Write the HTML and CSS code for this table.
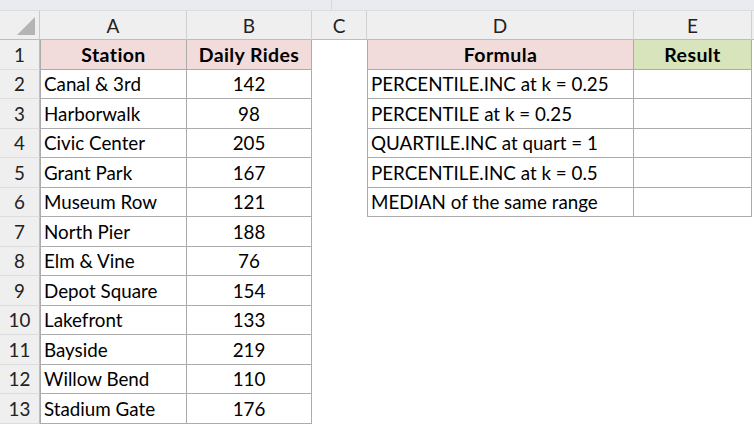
FILE: index.html
```html
<!DOCTYPE html>
<html>
<head>
<meta charset="utf-8">
<link rel="stylesheet" href="styles.css">
</head>
<body>
<div class="topbar"><div class="tb-seg tb-a"></div><div class="tb-seg tb-b"></div></div>
<div class="sheet">
  <div class="corner"><div class="tri"></div></div>
  <div class="ch">A</div><div class="ch">B</div><div class="ch">C</div><div class="ch">D</div><div class="ch">E</div><div class="ch ch-last"></div>

  <div class="rh">1</div>
  <div class="c t tl hd pink ctr">Station</div><div class="c t hd pink ctr">Daily Rides</div><div class="c"></div>
  <div class="c t tl hd pink ctr">Formula</div><div class="c t hd green ctr">Result</div><div class="c"></div>

  <div class="rh">2</div>
  <div class="c t tl">Canal &amp; 3rd</div><div class="c t ctr">142</div><div class="c"></div>
  <div class="c t tl">PERCENTILE.INC at k = 0.25</div><div class="c t"></div><div class="c"></div>

  <div class="rh">3</div>
  <div class="c t tl">Harborwalk</div><div class="c t ctr">98</div><div class="c"></div>
  <div class="c t tl">PERCENTILE at k = 0.25</div><div class="c t"></div><div class="c"></div>

  <div class="rh">4</div>
  <div class="c t tl">Civic Center</div><div class="c t ctr">205</div><div class="c"></div>
  <div class="c t tl">QUARTILE.INC at quart = 1</div><div class="c t"></div><div class="c"></div>

  <div class="rh">5</div>
  <div class="c t tl">Grant Park</div><div class="c t ctr">167</div><div class="c"></div>
  <div class="c t tl">PERCENTILE.INC at k = 0.5</div><div class="c t"></div><div class="c"></div>

  <div class="rh">6</div>
  <div class="c t tl">Museum Row</div><div class="c t ctr">121</div><div class="c"></div>
  <div class="c t tl">MEDIAN of the same range</div><div class="c t"></div><div class="c"></div>

  <div class="rh">7</div>
  <div class="c t tl">North Pier</div><div class="c t ctr">188</div><div class="c"></div><div class="c"></div><div class="c"></div><div class="c"></div>

  <div class="rh">8</div>
  <div class="c t tl">Elm &amp; Vine</div><div class="c t ctr">76</div><div class="c"></div><div class="c"></div><div class="c"></div><div class="c"></div>

  <div class="rh">9</div>
  <div class="c t tl">Depot Square</div><div class="c t ctr">154</div><div class="c"></div><div class="c"></div><div class="c"></div><div class="c"></div>

  <div class="rh">10</div>
  <div class="c t tl">Lakefront</div><div class="c t ctr">133</div><div class="c"></div><div class="c"></div><div class="c"></div><div class="c"></div>

  <div class="rh">11</div>
  <div class="c t tl">Bayside</div><div class="c t ctr">219</div><div class="c"></div><div class="c"></div><div class="c"></div><div class="c"></div>

  <div class="rh">12</div>
  <div class="c t tl">Willow Bend</div><div class="c t ctr">110</div><div class="c"></div><div class="c"></div><div class="c"></div><div class="c"></div>

  <div class="rh">13</div>
  <div class="c t tl">Stadium Gate</div><div class="c t ctr">176</div><div class="c"></div><div class="c"></div><div class="c"></div><div class="c"></div>
</div>
</body>
</html>
```
FILE: styles.css
```css
html, body { margin: 0; padding: 0; background: #fff; }
body {
  width: 754px; height: 425px; overflow: hidden;
  font-family: Lato, "Open Sans", sans-serif;
  font-size: 18.8px; color: #000;
}
.topbar {
  height: 11px; background: #e9ebee;
  display: flex; border-bottom: 1px solid #dadcdf; box-sizing: border-box;
}
.tb-seg { height: 100%; }
.tb-a { width: 331px; border-right: 1px solid #d5d7da; }
.sheet {
  display: grid;
  grid-template-columns: 40px 147px 125px 55px 267px 118px 2px;
  grid-template-rows: 29px repeat(13, 29.5px);
}
.corner {
  background: #efefef; border-right: 1px solid #c9c9c9; border-bottom: 1px solid #bdbdbd;
  position: relative; box-sizing: border-box;
}
.tri {
  position: absolute; right: 4px; bottom: 4px; width: 0; height: 0;
  border-left: 18px solid transparent; border-bottom: 18px solid #b4b4b4;
}
.ch {
  background: #efefef; border-right: 1px solid #d0d0d0; border-bottom: 1px solid #bdbdbd;
  box-sizing: border-box; display: flex; align-items: center; justify-content: center;
  color: #222; font-size: 19px;
}
.ch-last { border-right: none; }
.rh {
  background: #efefef; border-right: 1px solid #bdbdbd; border-bottom: 1px solid #dcdcdc;
  box-sizing: border-box; display: flex; align-items: center; justify-content: center;
  color: #222;
}
.c {
  box-sizing: border-box; display: flex; align-items: center;
  padding: 0 3px; white-space: nowrap; overflow: hidden; background: #fff;
}
.t { border-right: 1px solid #ababab; border-bottom: 1px solid #ababab; }
.tl { border-left: 1px solid #ababab; }
.ctr { justify-content: center; }
.hd { font-weight: 700; font-size: 19.5px; letter-spacing: 0.4px; }
.pink { background: #f2dcdb; }
.green { background: #d8e4bc; }
```
